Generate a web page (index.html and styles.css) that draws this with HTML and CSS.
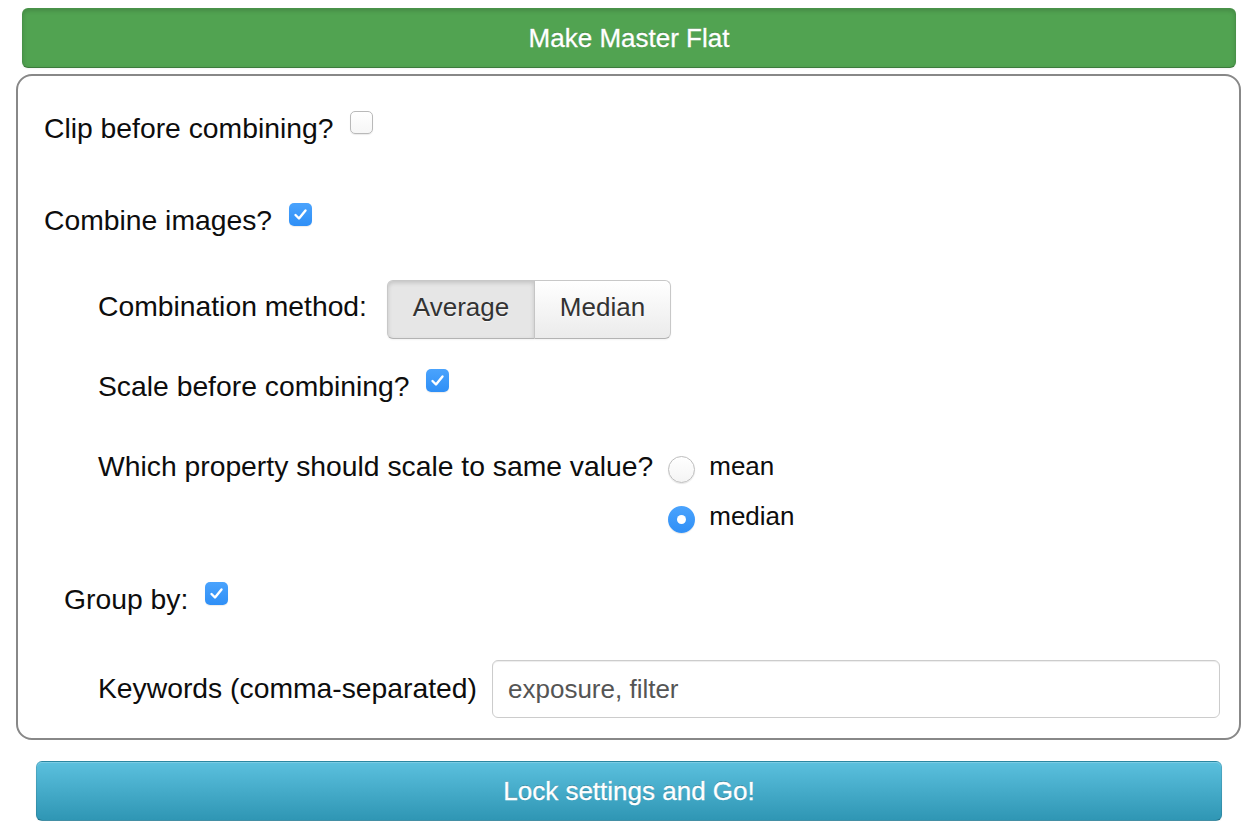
FILE: index.html
```html
<!DOCTYPE html>
<html>
<head>
<meta charset="utf-8">
<link rel="stylesheet" href="styles.css">
</head>
<body>
<div class="page">
  <button class="btn btn-success">Make Master Flat</button>
  <div class="panel">
    <div class="row r-clip">
      <span class="lbl">Clip before combining?</span>
      <span class="cb"></span>
    </div>
    <div class="row r-combine">
      <span class="lbl">Combine images?</span>
      <span class="cb checked"><svg viewBox="0 0 23 23" width="23" height="23"><polyline points="6.5,12 10,15.5 16.5,7.5" fill="none" stroke="#fff" stroke-width="2.4" stroke-linecap="round" stroke-linejoin="round"/></svg></span>
    </div>
    <div class="row r-method indent">
      <span class="lbl">Combination method:</span>
      <div class="btn-group">
        <button class="seg seg-first active">Average</button>
        <button class="seg seg-last">Median</button>
      </div>
    </div>
    <div class="row r-scale indent">
      <span class="lbl">Scale before combining?</span>
      <span class="cb checked"><svg viewBox="0 0 23 23" width="23" height="23"><polyline points="6.5,12 10,15.5 16.5,7.5" fill="none" stroke="#fff" stroke-width="2.4" stroke-linecap="round" stroke-linejoin="round"/></svg></span>
    </div>
    <div class="row r-prop indent">
      <span class="lbl">Which property should scale to same value?</span>
      <div class="radios">
        <div class="opt"><span class="radio"></span><span class="opt-lbl">mean</span></div>
        <div class="opt"><span class="radio on"><span class="dot"></span></span><span class="opt-lbl">median</span></div>
      </div>
    </div>
    <div class="row r-group indent-sm">
      <span class="lbl">Group by:</span>
      <span class="cb checked"><svg viewBox="0 0 23 23" width="23" height="23"><polyline points="6.5,12 10,15.5 16.5,7.5" fill="none" stroke="#fff" stroke-width="2.4" stroke-linecap="round" stroke-linejoin="round"/></svg></span>
    </div>
    <div class="row r-keys indent">
      <span class="lbl lbl-keys">Keywords (comma-separated)</span>
      <input class="text-input" type="text" value="exposure, filter">
    </div>
  </div>
  <button class="btn btn-info">Lock settings and Go!</button>
</div>
</body>
</html>
```

FILE: styles.css
```css
* { box-sizing: border-box; }
html, body { margin: 0; padding: 0; background: #fff; }
body {
  font-family: "Liberation Sans", Arial, Helvetica, sans-serif;
  color: #0d0d0d;
}
.page {
  width: 1260px;
  padding: 8px 19px 0 16px;
}
.btn {
  display: block;
  font-family: "Liberation Sans", Arial, Helvetica, sans-serif;
  font-size: 26px;
  color: #fff;
  text-align: center;
  border-radius: 6px;
  border: 1px solid rgba(0,0,0,0.1);
  border-bottom-color: rgba(0,0,0,0.25);
  padding: 0;
  cursor: pointer;
  -webkit-text-stroke: 0.3px #fff;
}
.btn-success {
  width: 1214px;
  height: 60px;
  margin: 0 0 0 6px;
  line-height: 55px;
  background: #51a351;
  box-shadow: inset 0 2px 4px rgba(0,0,0,0.15), 0 1px 2px rgba(0,0,0,0.05);
  text-shadow: 0 -1px 0 rgba(0,0,0,0.2);
}
.btn-info {
  width: 1186px;
  height: 60px;
  margin: 21px 0 0 20px;
  line-height: 56px;
  background: linear-gradient(to bottom, #5bc0de, #2f96b4);
  box-shadow: inset 0 1px 0 rgba(255,255,255,0.2), 0 1px 2px rgba(0,0,0,0.05);
  text-shadow: 0 -1px 0 rgba(0,0,0,0.25);
}
.panel {
  margin-top: 6px;
  border: 2px solid #888;
  border-radius: 16px;
  padding: 36px 19px 20px 26px;
}
.row {
  display: flex;
  align-items: flex-start;
}
.lbl {
  font-size: 28.3px;
  line-height: 32px;
  white-space: nowrap;
}
.indent { padding-left: 54px; }
.indent-sm { padding-left: 20px; }

.r-combine { margin-top: 60px; }
.r-method { margin-top: 44px; align-items: baseline; }
.r-scale { margin-top: 31px; }
.r-prop { margin-top: 48px; }
.r-group { margin-top: 50px; }
.r-keys { margin-top: 45px; }

.cb {
  flex: none;
  width: 23px;
  height: 23px;
  margin: -1px 0 0 17px;
  border-radius: 5px;
  border: 1px solid #b9b9b9;
  background: linear-gradient(to bottom, #fff, #f6f6f6);
  box-shadow: 0 1px 1px rgba(0,0,0,0.08);
}
.cb.checked {
  border: none;
  background: linear-gradient(to bottom, #4aa3fd, #2f8ff6);
}
.cb svg { display: block; }

.btn-group {
  display: flex;
  margin-left: 20px;
}
.seg {
  font-family: "Liberation Sans", Arial, Helvetica, sans-serif;
  font-size: 26px;
  line-height: 30px;
  color: #333;
  padding: 11px 0 16px;
  height: 59px;
  border: 1px solid #c8c8c8;
  border-bottom-color: #b3b3b3;
  text-shadow: 0 1px 1px rgba(255,255,255,0.75);
  background: linear-gradient(to bottom, #ffffff, #ebebeb);
  box-shadow: inset 0 1px 0 rgba(255,255,255,0.2), 0 1px 2px rgba(0,0,0,0.05);
}
.seg-first {
  border-radius: 6px 0 0 6px;
  width: 148px;
}
.seg-last {
  border-radius: 0 6px 6px 0;
  border-left: none;
  width: 136px;
}
.seg.active {
  background: #e6e6e6;
  box-shadow: inset 0 2px 4px rgba(0,0,0,0.15), 0 1px 2px rgba(0,0,0,0.05);
}

.radios {
  display: flex;
  flex-direction: column;
  gap: 17px;
  margin-left: 15px;
}
.opt {
  display: flex;
  align-items: flex-start;
}
.radio {
  flex: none;
  width: 27px;
  height: 27px;
  margin-top: 6px;
  border-radius: 50%;
  border: 1px solid #bdbdbd;
  background: linear-gradient(to bottom, #fff, #f4f4f4);
  box-shadow: 0 1px 1px rgba(0,0,0,0.1);
  display: flex;
  align-items: center;
  justify-content: center;
}
.radio.on {
  border: none;
  background: linear-gradient(to bottom, #4aa3fd, #2f8ff6);
}
.dot {
  width: 9px;
  height: 9px;
  border-radius: 50%;
  background: #fff;
}
.opt-lbl {
  font-size: 26px;
  line-height: 32px;
  margin-left: 14px;
}

.lbl-keys { margin-top: 12px; }
.text-input {
  flex: 1;
  margin-left: 15px;
  height: 58px;
  padding: 0 15px;
  font-family: "Liberation Sans", Arial, Helvetica, sans-serif;
  font-size: 26px;
  color: #555;
  border: 1px solid #ccc;
  border-radius: 6px;
  box-shadow: inset 0 1px 1px rgba(0,0,0,0.075);
  background: #fff;
  outline: none;
}
```
